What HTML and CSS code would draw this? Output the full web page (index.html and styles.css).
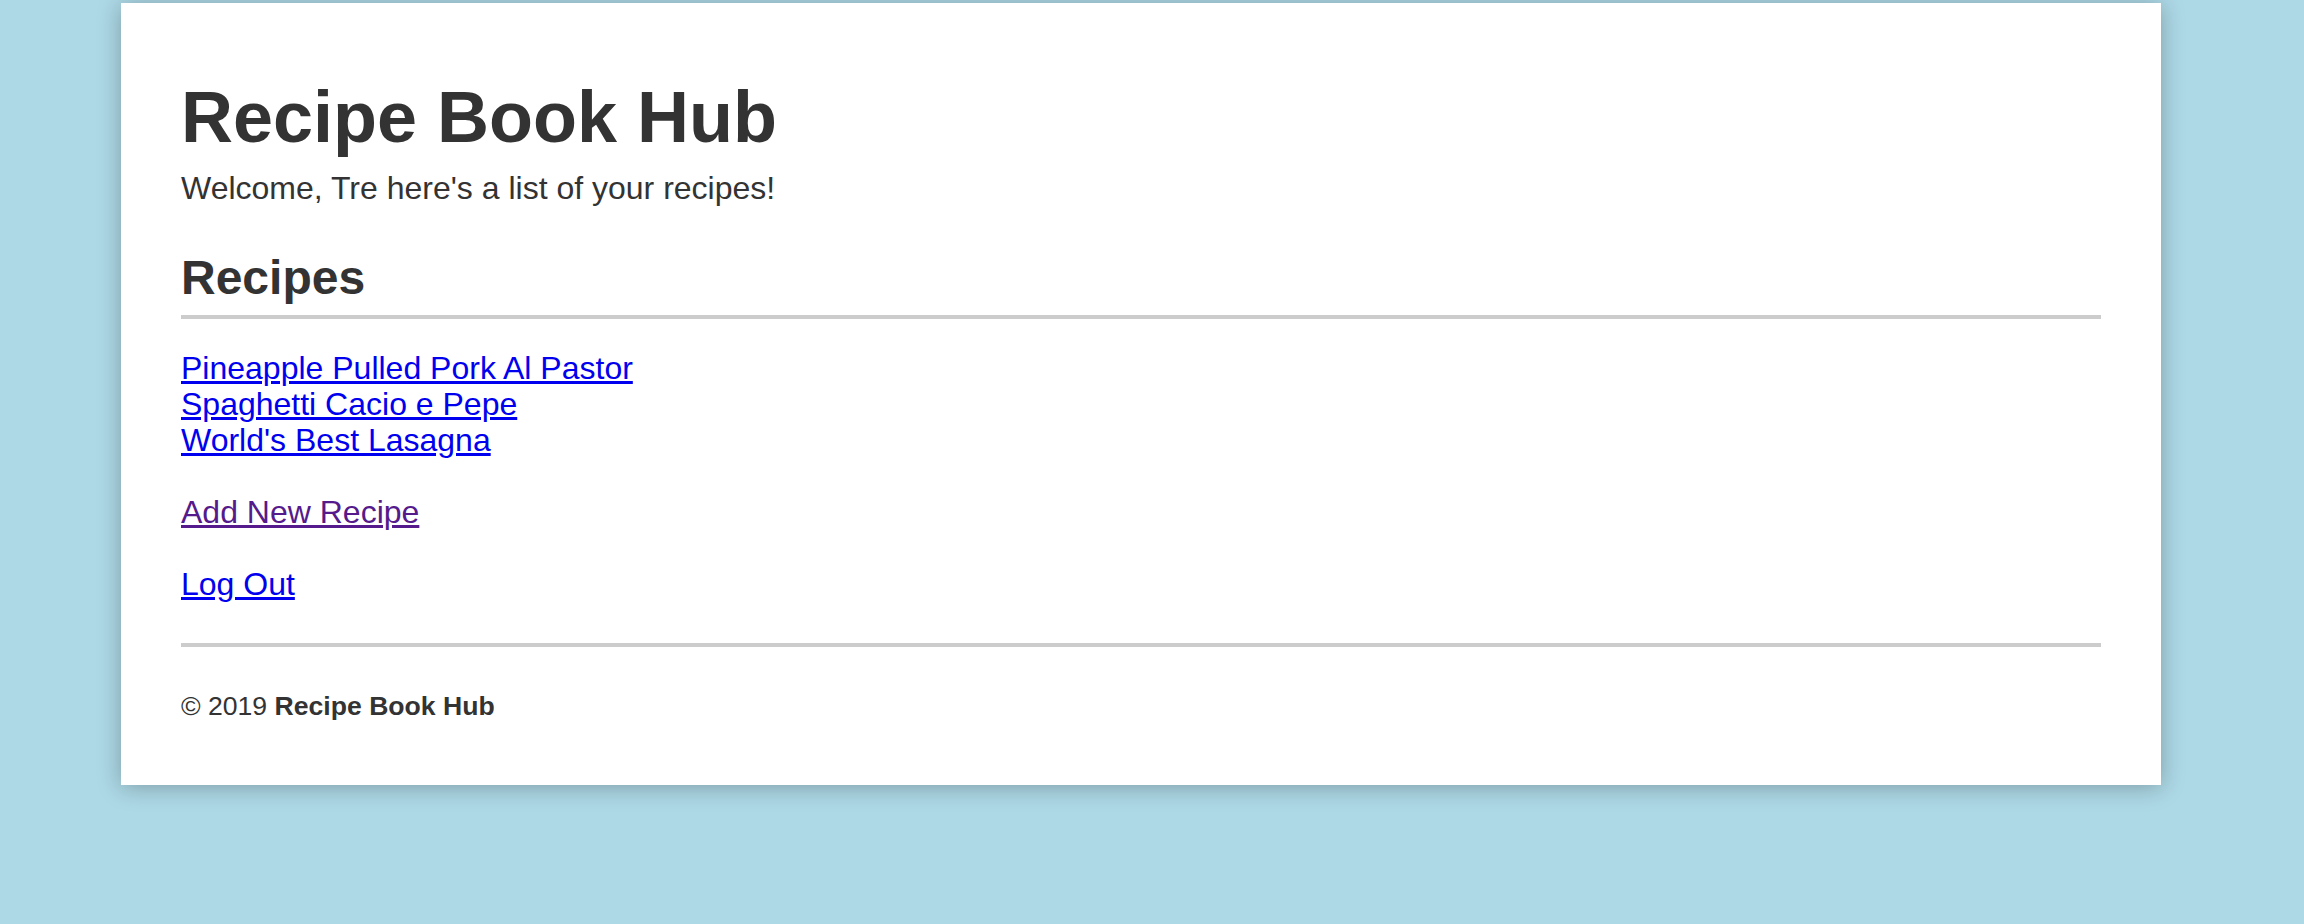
FILE: index.html
```html
<!DOCTYPE html>
<html lang="en">
<head>
<meta charset="utf-8">
<title>Recipe Book Hub</title>
<link rel="stylesheet" href="styles.css">
</head>
<body>
<main class="card">
  <header class="masthead">
    <h1 class="title">Recipe Book Hub</h1>
    <p class="welcome">Welcome, Tre here's a list of your recipes!</p>
  </header>
  <section class="recipes">
    <h2 class="section-title">Recipes</h2>
    <hr class="rule">
    <ul class="recipe-list">
      <li><a class="link" href="#pineapple">Pineapple Pulled Pork Al Pastor</a></li>
      <li><a class="link" href="#cacio">Spaghetti Cacio e Pepe</a></li>
      <li><a class="link" href="#lasagna">World's Best Lasagna</a></li>
    </ul>
    <p class="action"><a class="link visited" href="#new">Add New Recipe</a></p>
    <p class="action"><a class="link" href="#logout">Log Out</a></p>
  </section>
  <hr class="rule rule-footer">
  <footer class="footer">© 2019 <strong>Recipe Book Hub</strong></footer>
</main>
</body>
</html>
```
FILE: styles.css
```css
html, body {
  margin: 0;
  padding: 0;
}

body {
  background: #add8e6;
  font-family: "Liberation Sans", Arial, Helvetica, sans-serif;
  color: #333333;
  height: 924px;
  overflow: hidden;
}

.card {
  display: block;
  margin: 3px 143px 0 121px;
  padding: 74px 60px 63px 60px;
  background: #ffffff;
  box-shadow: 0 2px 22px rgba(0, 0, 0, 0.28);
}

.title {
  margin: 0;
  font-size: 72px;
  line-height: 80px;
  font-weight: bold;
  color: #333333;
}

.welcome {
  margin: 13px 0 0 0;
  font-size: 32px;
  line-height: 36px;
}

.section-title {
  margin: 44px 0 0 0;
  font-size: 48px;
  line-height: 56px;
  font-weight: bold;
}

.rule {
  display: block;
  margin: 9px 0 0 0;
  height: 4px;
  border: 0;
  background: #cccccc;
}

.recipe-list {
  list-style: none;
  margin: 31px 0 0 0;
  padding: 0;
  font-size: 32px;
  line-height: 36px;
}

.action {
  margin: 36px 0 0 0;
  font-size: 32px;
  line-height: 36px;
}

.link {
  color: #0000ee;
  text-decoration: underline;
}

.link.visited {
  color: #551a8b;
}

.rule-footer {
  margin-top: 41px;
}

.footer {
  display: block;
  margin-top: 43px;
  font-size: 26.6px;
  line-height: 32px;
}

.footer strong {
  font-weight: bold;
}
```
